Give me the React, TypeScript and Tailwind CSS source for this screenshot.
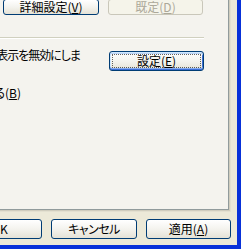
import React from "react";

const font = {
  fontFamily: '"Noto Sans CJK JP", "Noto Sans", sans-serif',
};

function Btn({
  children,
  className = "",
  disabled = false,
  focused = false,
}: {
  children: React.ReactNode;
  className?: string;
  disabled?: boolean;
  focused?: boolean;
}) {
  const base =
    "relative flex shrink-0 items-center justify-center rounded-[3px] border text-[12px] leading-[14px] whitespace-nowrap [font-feature-settings:'palt']";
  const look = disabled
    ? "border-[#c9c7ba] bg-[#f5f4ea] text-[#aca899]"
    : "border-[#003c74] bg-gradient-to-b from-[#ffffff] via-[#f4f3ee] to-[#e5e2d6] text-black";
  const focus = focused
    ? "shadow-[inset_0_1px_0_#cee7ff,inset_0_2px_0_#bcd4f6,inset_0_-1px_0_#3d6ed6,inset_0_-2px_0_#89adf0,inset_1px_0_0_#cee7ff,inset_-1px_0_0_#3d6ed6]"
    : "";
  return (
    <div className={`${base} ${look} ${focus} ${className}`}>
      {children}
      {focused && (
        <div className="pointer-events-none absolute inset-[2px] border border-dotted border-black/60" />
      )}
    </div>
  );
}

export default function App() {
  return (
    <div
      style={font}
      className="box-border flex h-[249px] w-[241px] flex-col overflow-hidden border-b-4 border-r-4 border-[#0831d9] bg-[#ece9d8] text-black"
    >
      {/* Tab page */}
      <div className="ml-[-10px] mt-[-10px] box-border flex h-[220px] w-[239px] shrink-0 flex-col border-b border-r border-[#919b9c] bg-[#f4f3ee] shadow-[1px_1px_0_#d0cdbe,2px_2px_0_#e3e0d0]">
        <div className="ml-[13px] mt-[9px] flex gap-[9px]">
          <Btn className="h-[16px] w-[96px]">
            詳細設定(<u>V</u>)
          </Btn>
          <Btn className="h-[16px] w-[95px]" disabled>
            既定(<u>D</u>)
          </Btn>
        </div>

        <div className="mt-[22px] h-[2px] w-[214px] border-b border-t border-b-white border-t-[#d0d0bf]" />

        <div className="flex items-start">
          <div className="mt-[9px] flex w-[90px] justify-end whitespace-nowrap text-[12px] leading-[14px] tracking-[-1px] [font-feature-settings:'palt']">
            表示を無効にしま
          </div>
          <Btn className="ml-[29px] mt-[12px] h-[20px] w-[95px]" focused>
            設定(<u>E</u>)
          </Btn>
        </div>

        <div className="mt-[15px] flex w-[31px] justify-end whitespace-nowrap text-[12px] leading-[14px] [font-feature-settings:'palt']">
          る(<u>B</u>)
        </div>
      </div>

      {/* Dialog buttons */}
      <div className="ml-[-43px] mt-[9px] flex gap-[9px]">
        <Btn className="h-[20px] w-[85px]">OK</Btn>
        <Btn className="h-[20px] w-[86px] tracking-[-0.5px]">キャンセル</Btn>
        <Btn className="h-[20px] w-[85px]">
          適用(<u>A</u>)
        </Btn>
      </div>
    </div>
  );
}
